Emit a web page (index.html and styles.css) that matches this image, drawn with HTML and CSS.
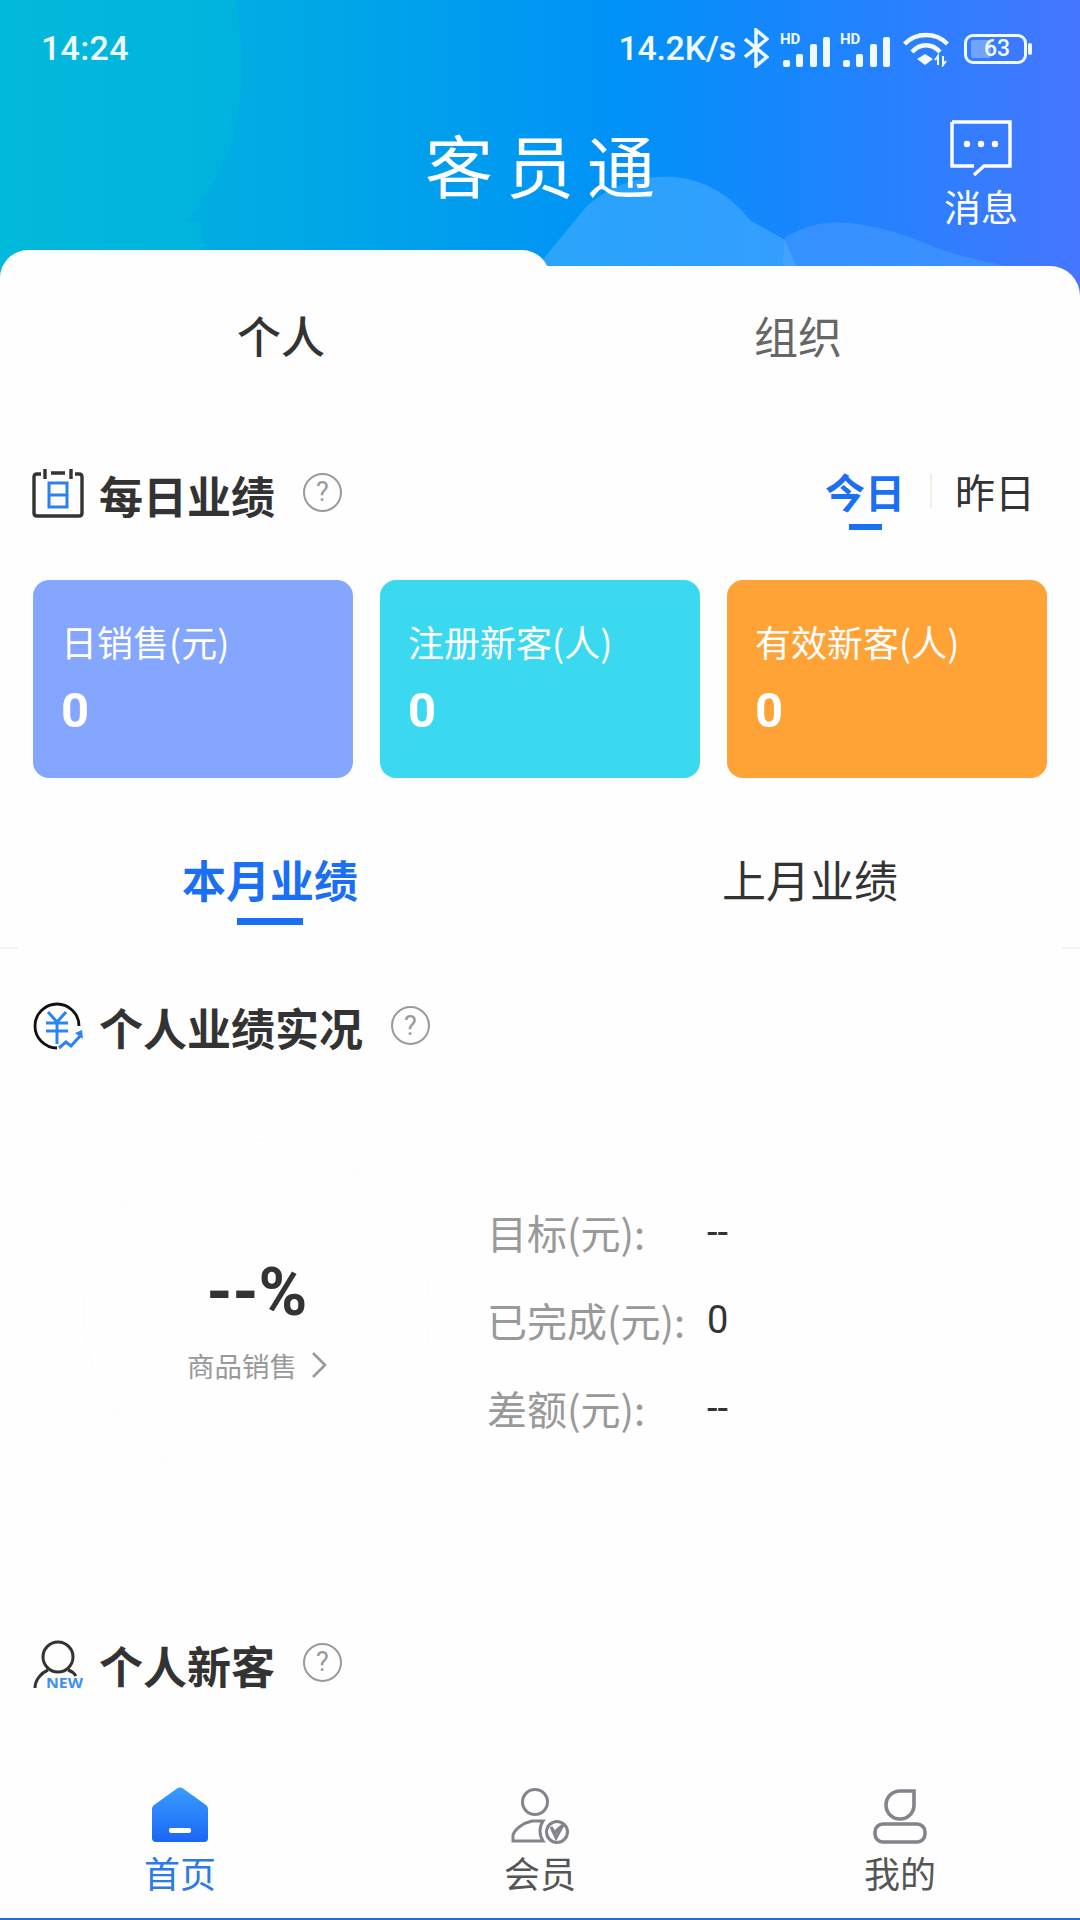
FILE: index.html
```html
<!DOCTYPE html>
<html lang="zh-CN">
<head>
<meta charset="utf-8">
<title>客员通</title>
<link rel="stylesheet" href="styles.css">
</head>
<body>
<div class="app">
  <header class="hero">
    <svg class="hero-art" width="1080" height="300" viewBox="0 0 1080 300">
      <path d="M0 0H236C250 90 240 160 186 222L200 222L207 260L0 300Z" fill="#00c0d8" fill-opacity=".38"/>
      <path d="M780 300L785 237C805 226 825 220 850 223C875 226 900 232 937 248C965 258 990 262 1013 268L1030 300Z" fill="#3f95ff" fill-opacity=".75"/>
      <path d="M530 275L586 207C610 185 640 175 675 177C705 180 730 195 750 220L785 240L800 275Z" fill="#4fb0ff" fill-opacity=".55"/>
    </svg>
    <div class="status">
      <span class="clock">14:24</span>
      <div class="status-right">
        <span class="speed">14.2K/s</span>
        <svg class="ic-bt" width="25" height="40" viewBox="0 0 25 40"><path d="M1 11L23 29L12 38V2L23 11L1 29" fill="none" stroke="#f2fbff" stroke-width="3.400"/></svg>
        <div class="signal"><span class="hd">HD</span><svg width="47" height="30" viewBox="0 0 47 30"><g fill="#eefaff"><rect x="0" y="23" width="7" height="7" rx="2"/><rect x="13" y="17" width="7" height="13" rx="2"/><rect x="27" y="7" width="7" height="23" rx="2"/><rect x="40" y="0" width="7" height="30" rx="2"/></g></svg></div>
        <div class="signal"><span class="hd">HD</span><svg width="47" height="30" viewBox="0 0 47 30"><g fill="#eefaff"><rect x="0" y="23" width="7" height="7" rx="2"/><rect x="13" y="17" width="7" height="13" rx="2"/><rect x="27" y="7" width="7" height="23" rx="2"/><rect x="40" y="0" width="7" height="30" rx="2"/></g></svg></div>
        <svg class="ic-wifi" width="46" height="36" viewBox="0 0 46 36"><g fill="none" stroke="#f2fbff" stroke-width="4.400"><path d="M1.500 13C13 1 33 1 44.500 13"/><path d="M9 21C17 12 29 12 37 21"/></g><path d="M14 28L22 23L30 28L22 34Z" fill="#f2fbff"/><path d="M35 34V25L32 29M40 25V34L43 30" fill="none" stroke="#f2fbff" stroke-width="2"/></svg>
        <div class="battery"><div class="battery-body"><span class="battery-fill"></span><span class="battery-num">63</span></div><span class="battery-tip"></span></div>
      </div>
    </div>
    <div class="titlebar">
      <h1 class="brand">客员通</h1>
      <div class="msg">
        <svg width="62" height="56" viewBox="0 0 62 56"><path d="M2 2H60V46H34L24 55" fill="none" stroke="#fff" stroke-width="3.400"/><path d="M24 46H2V2" fill="none" stroke="#fff" stroke-width="3.400"/><g fill="#fff"><circle cx="17" cy="24" r="3.200"/><circle cx="31" cy="24" r="3.200"/><circle cx="45" cy="24" r="3.200"/></g></svg>
        <span>消息</span>
      </div>
    </div>
    <div class="tabs">
      <div class="tab tab-on">个人</div>
      <div class="tab tab-off">组织</div>
    </div>
  </header>

  <main class="content">
    <section class="head head-daily">
      <svg class="ic-sec ic-cal" width="50" height="50" viewBox="0 0 50 50"><path d="M8 6H4Q1 6 1 9V45Q1 48 4 48H46Q49 48 49 45V9Q49 6 46 6H42" fill="none" stroke="#333" stroke-width="3.400"/><path d="M12 1V11M38 1V11M18 5H32" stroke="#333" stroke-width="3.400" fill="none"/><path d="M16 15H34V39H16ZM16 27H34" fill="none" stroke="#2b7ff0" stroke-width="3"/></svg>
      <h2 class="head-text">每日业绩</h2>
      <span class="help">?</span>
      <div class="day-switch">
        <div class="day day-on">今日<i class="bar-sm"></i></div>
        <i class="day-line"></i>
        <div class="day">昨日</div>
      </div>
    </section>

    <section class="cards">
      <div class="card card-blue"><span class="card-label">日销售(元)</span><b class="card-val">0</b></div>
      <div class="card card-cyan"><span class="card-label">注册新客(人)</span><b class="card-val">0</b></div>
      <div class="card card-orange"><span class="card-label">有效新客(人)</span><b class="card-val">0</b></div>
    </section>

    <nav class="month-tabs">
      <div class="month month-on">本月业绩<i class="bar-lg"></i></div>
      <div class="month">上月业绩</div>
    </nav>
    <div class="edge-ticks"><i></i><i></i></div>

    <section class="head head-personal">
      <svg class="ic-sec" width="50" height="50" viewBox="0 0 50 50"><path d="M24 46A22 22 0 1 1 46 24" fill="none" stroke="#111" stroke-width="2.800"/><g fill="none" stroke="#2b83f6" stroke-width="3"><path d="M15 10L24 20L33 10M13 21H35M13 29H35M24 20V42"/><path d="M26 46L33 40L38 44L48 33"/></g><path d="M49 28L50 37L42 31Z" fill="#2b83f6"/></svg>
      <h2 class="head-text">个人业绩实况</h2>
      <span class="help">?</span>
    </section>

    <section class="progress">
      <div class="ring">
        <div class="ring-val">--%</div>
        <div class="ring-sub">商品销售<svg class="chev" width="16" height="28" viewBox="0 0 16 28"><path d="M2 2L14 14L2 26" fill="none" stroke="#999" stroke-width="2.600"/></svg></div>
      </div>
      <dl class="stats">
        <div class="stat"><dt>目标(元):</dt><dd>--</dd></div>
        <div class="stat"><dt>已完成(元):</dt><dd>0</dd></div>
        <div class="stat"><dt>差额(元):</dt><dd>--</dd></div>
      </dl>
    </section>

    <section class="head head-new">
      <svg class="ic-sec" width="50" height="50" viewBox="0 0 50 50"><circle cx="25" cy="17" r="15" fill="none" stroke="#333" stroke-width="3"/><path d="M2 48C2 40 8 33 15 30M35 30C38 31 41 33 43 36" fill="none" stroke="#333" stroke-width="3"/><text class="new-tag" x="13" y="48" textLength="37" lengthAdjust="spacingAndGlyphs">NEW</text></svg>
      <h2 class="head-text">个人新客</h2>
      <span class="help">?</span>
    </section>
  </main>

  <footer class="nav">
    <div class="nav-item nav-on">
      <svg width="58" height="58" viewBox="0 0 58 58"><defs><linearGradient id="homeg" x1="0" y1="0" x2="0" y2="1"><stop offset="0" stop-color="#3a9cff"/><stop offset="1" stop-color="#1a66f5"/></linearGradient></defs><path d="M26 1.500Q29 -.5 32 1.500L55 18Q57 19.500 57 22V51Q57 55 53 55H5Q1 55 1 51V22Q1 19.500 3 18Z" fill="url(#homeg)"/><rect x="18" y="41" width="22" height="5" rx="2" fill="#fff"/></svg>
      <span>首页</span>
    </div>
    <div class="nav-item">
      <svg width="58" height="58" viewBox="0 0 58 58"><g fill="none" stroke="#85828c" stroke-width="3"><circle cx="24" cy="15" r="12.500"/><path d="M32 34H21C12 36 4 42 2 48V54H32C28 48 28 40 32 34Z"/><circle cx="46" cy="45" r="10.500"/></g><path d="M40 40L45 51L52 38L46 43L44 46Z" fill="none" stroke="#85828c" stroke-width="3"/></svg>
      <span>会员</span>
    </div>
    <div class="nav-item">
      <svg width="58" height="58" viewBox="0 0 58 58"><g fill="none" stroke="#85828c" stroke-width="3.600"><path d="M29 4H43V18A14 14 0 1 1 29 4Z"/><rect x="4" y="37" width="50" height="18" rx="8"/></g></svg>
      <span>我的</span>
    </div>
  </footer>
</div>
</body>
</html>
```
FILE: styles.css
```css
* { box-sizing: border-box; margin: 0; padding: 0; }
html, body { width: 1080px; height: 1920px; overflow: hidden; background: #fff; }
body { font-family: Roboto, "Noto Sans CJK SC", sans-serif; color: #333; }
i { display: block; }

.app { width: 1080px; height: 1920px; display: flex; flex-direction: column; background: #fefefe; }

/* header */
.hero { position: relative; height: 360px; flex: none; display: flex; flex-direction: column;
  background: linear-gradient(90deg, #04b6dd 0%, #00a7e6 30%, #0092f7 57%, #1a85ff 75%, #4676ff 100%); }
.hero-art { position: absolute; left: 0; top: 0; }
.status { position: relative; height: 94px; padding: 30px 48px 0 41px; display: flex; justify-content: space-between; align-items: flex-start; color: #eefaff; }
.clock { font-size: 34px; font-weight: 500; line-height: 36px; letter-spacing: .3px; }
.status-right { display: flex; align-items: center; height: 36px; }
.speed { font-size: 34px; font-weight: 500; line-height: 36px; letter-spacing: -.3px; }
.ic-bt { margin-left: 8px; }
.signal { position: relative; width: 47px; height: 34px; margin: 4px 0 0 14px; display: flex; align-items: flex-end; }
.signal + .signal { margin-left: 13px; }
.hd { position: absolute; left: -3px; top: -1px; font: 700 15px/15px Roboto, sans-serif; color: #eefaff; }
.ic-wifi { margin: 2px 0 0 13px; }
.battery { display: flex; align-items: center; margin: 2px 0 0 15px; }
.battery-body { position: relative; width: 63px; height: 30px; border: 3px solid #eefaff; border-radius: 9px; display: flex; align-items: center; justify-content: center; }
.battery-fill { position: absolute; left: 4px; top: 3px; bottom: 3px; width: 20px; background: rgba(255,255,255,.3); border-radius: 2px; }
.battery-num { position: relative; font-size: 23px; font-weight: 500; line-height: 24px; color: #f4fbff; padding-left: 3px; }
.battery-tip { width: 4px; height: 12px; margin-left: 1px; background: #eefaff; border-radius: 2px; }

.titlebar { position: relative; height: 156px; flex: none; display: flex; justify-content: center; }
.brand { font: 400 68px/80px "Noto Sans CJK SC", sans-serif; letter-spacing: 13px; color: #fff; padding: 30px 0 0 13px; height: 110px; }
.msg { position: absolute; right: 62px; top: 26px; display: flex; flex-direction: column; align-items: center; color: #fff; font: 400 37px/42px "Noto Sans CJK SC", sans-serif; gap: 9px; }

.tabs { position: relative; flex: 1; display: flex; align-items: flex-end; }
.tab { display: flex; align-items: flex-start; justify-content: center; background: #fefefe; font: 400 44px/60px "Noto Sans CJK SC", sans-serif; }
.tab-on { width: 550px; height: 110px; border-radius: 28px 28px 0 0; padding: 55px 0 0 12px; color: #333; position: relative; z-index: 1; font-weight: 500; }
.tab-off { flex: 1; height: 94px; margin-left: -40px; padding: 39px 0 0 6px; border-radius: 0 30px 0 0; color: #666; }

/* sections */
.content { flex: 1; min-height: 0; display: flex; flex-direction: column; padding: 0 33px; }
.head { display: flex; align-items: center; height: 60px; }
.head-daily { margin-top: 105px; }
.ic-sec { flex: none; overflow: visible; }
.ic-cal { margin-top: -4px; }
.head-text { font: 700 44px/60px "Noto Sans CJK SC", sans-serif; color: #333; margin-left: 16px; white-space: nowrap; }
.help { flex: none; width: 39px; height: 39px; margin: -6px 0 0 28px; border: 2.500px solid #9a9a9a; border-radius: 50%; display: flex; align-items: center; justify-content: center; font: 400 27px/32px Roboto, sans-serif; color: #9a9a9a; }

.day-switch { margin-left: auto; display: flex; align-items: center; margin-right: 12px; }
.day { position: relative; font: 400 40px/50px "Noto Sans CJK SC", sans-serif; color: #333; margin-top: -8px; }
.day-on { color: #1a6ff5; font-weight: 700; }
.day-line { width: 2px; height: 34px; margin: -8px 23px 0 25px; background: #f0efe5; }
.bar-sm { position: absolute; left: 24px; top: 58px; width: 33px; height: 6px; background: #1a6ff5; }

.cards { display: flex; gap: 27px; margin-top: 55px; }
.card { width: 320px; height: 198px; border-radius: 16px; padding: 36px 0 0 28px; color: #fff; display: flex; flex-direction: column; }
.card-blue { background: #84a6ff; }
.card-cyan { background: #3bd9f0; }
.card-orange { background: #ffa336; }
.card-label { font: 400 36px/50px "Noto Sans CJK SC", sans-serif; }
.card-val { font: 700 49px/58px Roboto, sans-serif; margin: 16px 0 0 0; }

.month-tabs { display: flex; margin-top: 69px; }
.month { position: relative; flex: none; width: 474px; text-align: center; font: 400 44px/64px "Noto Sans CJK SC", sans-serif; color: #333; }
.month-on { color: #1a6ff5; font-weight: 700; }
.month + .month { margin-left: 66px; }
.bar-lg { position: absolute; left: 204px; top: 71px; width: 66px; height: 7px; background: #1a6ff5; }

.edge-ticks { display: flex; justify-content: space-between; margin: 36px -33px 0; height: 2px; }
.edge-ticks i { width: 18px; height: 2px; background: #f4f3ec; }

.head-personal { margin-top: 48px; }
.head-personal .help { margin-top: -3px; }

.progress { display: flex; height: 578px; position: relative; }
.ring { position: relative; width: 348px; height: 348px; margin: 82px 0 0 50px; border-radius: 50%; border: 2px dotted #fbfbfb; display: flex; flex-direction: column; align-items: center; padding-top: 112px; }
.ring-val { font: 700 66px/80px Roboto, sans-serif; color: #333; }
.ring-sub { display: flex; align-items: center; font: 400 27.5px/36px "Noto Sans CJK SC", sans-serif; color: #999; margin-top: 14px; gap: 14px; }
.stats { margin: 146px 0 0 56px; display: flex; flex-direction: column; gap: 30px; }
.stat { display: flex; height: 58px; align-items: center; font: 400 40px/58px "Noto Sans CJK SC", sans-serif; }
.stat dt { width: 220px; color: #999; white-space: nowrap; }
.stat dd { color: #333; font-family: Roboto, sans-serif; font-size: 38px; }

.new-tag { font: 700 15px "Open Sans", sans-serif; fill: #3d8ff5; }

/* bottom nav */
.nav { flex: none; height: 139px; display: grid; grid-template-columns: 360px 360px 360px; border-bottom: 2px solid #1f6fe0; background: #fefefe; }
.nav-item { display: flex; flex-direction: column; align-items: center; padding-top: 6px; font: 400 36px/46px "Noto Sans CJK SC", sans-serif; color: #555; gap: 4px; }
.nav-on { color: #2b7ae8; }
```
